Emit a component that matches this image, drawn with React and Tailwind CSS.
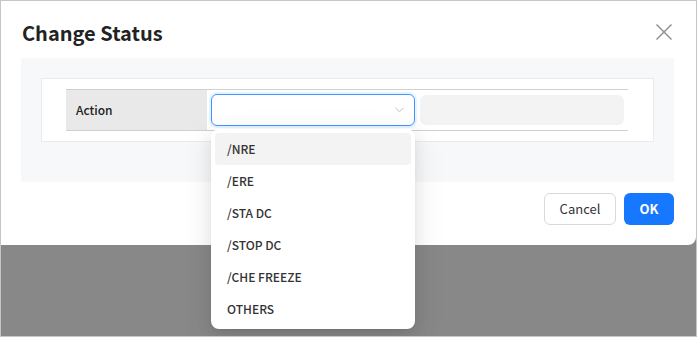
import React from 'react'

const options = ['/NRE', '/ERE', '/STA DC', '/STOP DC', '/CHE FREEZE', 'OTHERS']

export default function App() {
  return (
    <div
      className="w-[697px] h-[337px] border border-[#c6c6c6] bg-[#888888] overflow-hidden"
      style={{ fontFamily: '"Noto Sans CJK KR", "Noto Sans", sans-serif' }}
    >
      <div className="relative w-[695px] h-[244px] bg-white rounded-br-lg px-5 pr-[22px] pt-4">
        <h2 className="h-8 leading-8 text-[20px] font-semibold text-[#222] mb-[9px] pl-[1px]">Change Status</h2>

        {/* close */}
        <button className="absolute top-[22px] right-[23px] w-[18px] h-[18px] text-[#8a8a8a]">
          <svg viewBox="0 0 18 18" width="18" height="18" fill="none" stroke="currentColor" strokeWidth="1.4">
            <path d="M1.5 1.5 L16.5 16.5 M16.5 1.5 L1.5 16.5" />
          </svg>
        </button>

        <div className="bg-[#f7f8fa] pt-5 px-5 pb-10">
          <div className="bg-white border border-[#e9ebef] pt-[10px] pb-[10px] pl-6 pr-[25px]">
            <div className="flex border-y border-[#d0d0d0] h-[42px]">
              <div className="w-[141px] bg-[#e9e9e9] flex items-center pl-[10px] text-[12px] font-medium text-[#222]">
                Action
              </div>
              <div className="flex-1 grid grid-cols-2 gap-[5px] py-1 pl-1 pr-1">
                <div className="relative">
                  <div className="h-8 border border-[#4096ff] rounded-md shadow-[0_0_0_2px_rgba(5,145,255,0.1)] flex items-center justify-end pr-[10px]">
                    <svg viewBox="0 0 10 6" width="9" height="6" fill="none" stroke="#b8b8b8" strokeWidth="1">
                      <path d="M0.5 0.5 L5 5 L9.5 0.5" />
                    </svg>
                  </div>
                  <ul className="absolute z-10 left-0 top-[35px] w-full bg-white rounded-lg p-1 shadow-[0_6px_16px_0_rgba(0,0,0,0.08),0_3px_6px_-4px_rgba(0,0,0,0.12),0_9px_28px_8px_rgba(0,0,0,0.05)]">
                    {options.map((o, i) => (
                      <li
                        key={o}
                        className={`h-8 flex items-center pl-3 rounded text-[12px] font-medium text-[#333] ${i === 0 ? 'bg-[#f3f3f3]' : ''}`}
                      >
                        {o}
                      </li>
                    ))}
                  </ul>
                </div>
                <div className="h-[30px] mt-[1px] bg-[#f3f3f3] rounded-md" />
              </div>
            </div>
          </div>
        </div>

        <div className="flex justify-end gap-2 mt-[11px]">
          <button className="h-8 w-[72px] border border-[#d9d9d9] rounded-md bg-white text-[13px] text-[#333]">Cancel</button>
          <button className="h-8 w-[50px] rounded-md bg-[#1677ff] text-[13px] font-semibold text-white">OK</button>
        </div>
      </div>
    </div>
  )
}
